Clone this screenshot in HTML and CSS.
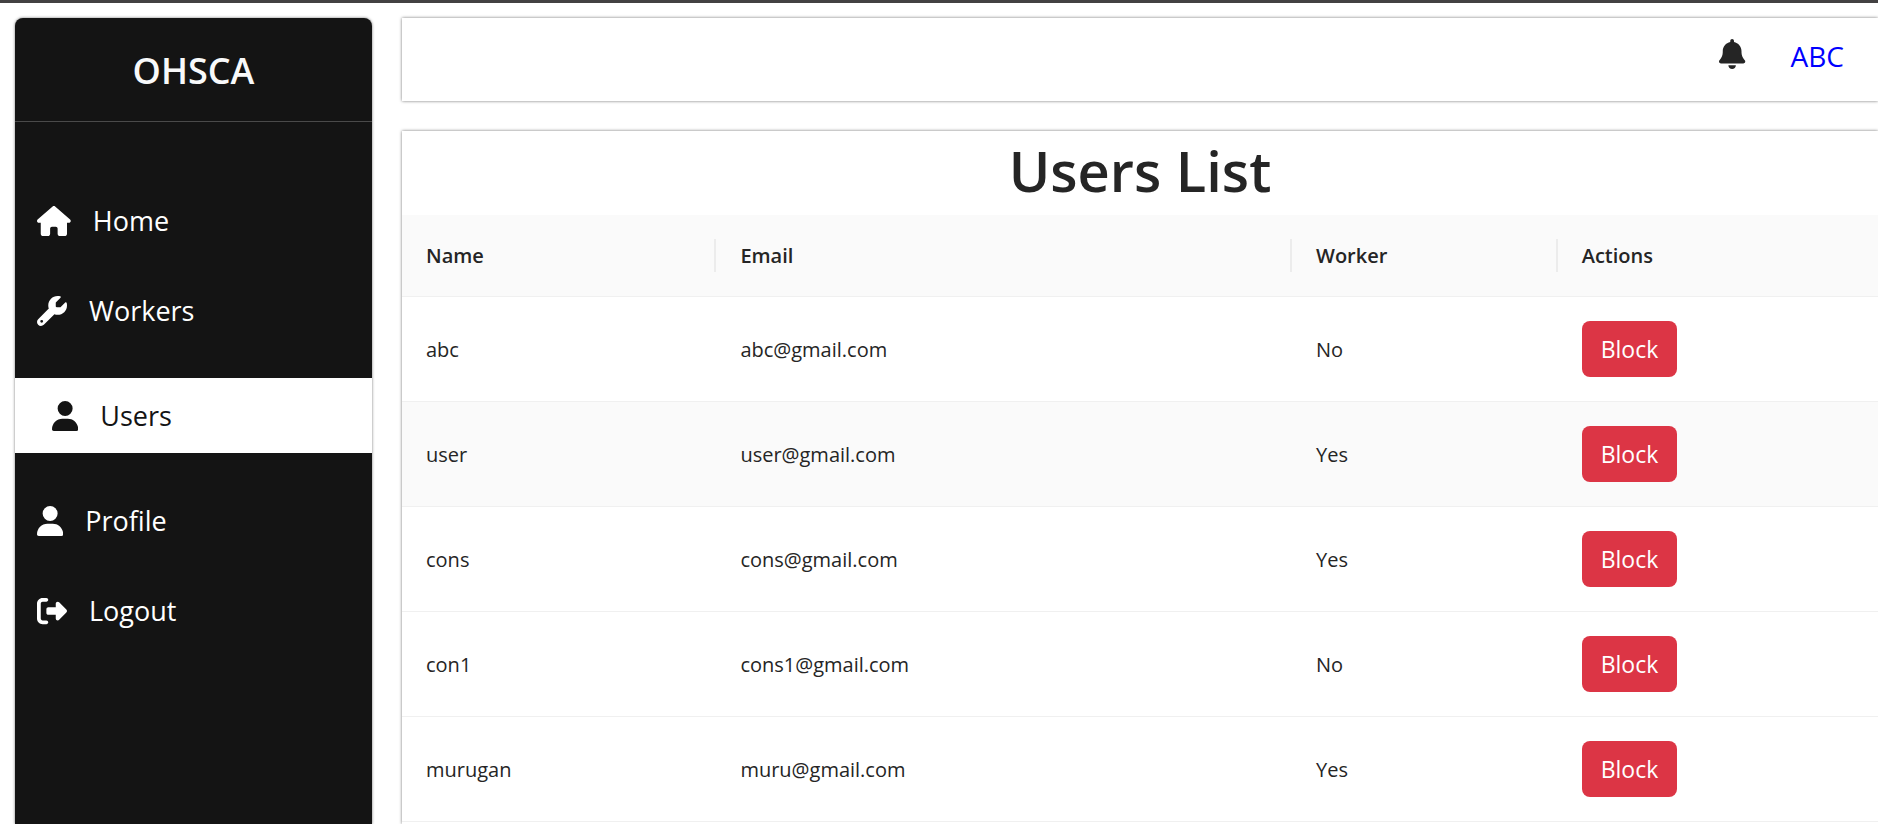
FILE: index.html
```html
<!DOCTYPE html>
<html lang="en">
<head>
<meta charset="utf-8">
<title>OHSCA - Users List</title>
<link rel="stylesheet" href="styles.css">
</head>
<body>
<div class="layout">
  <aside class="sidebar">
    <h2 class="brand">OHSCA</h2>
    <nav class="menu">
      <a class="menu-item" href="#home"><svg class="icon" viewBox="0 0 576 512" aria-hidden="true"><path d="M575.8 255.5c0 18-15 32.1-32 32.1h-32l.7 160.2c0 2.7-.2 5.4-.5 8.1V472c0 22.1-17.900 40-40 40H456c-1.100 0-2.200 0-3.300-.1c-1.400 .1-2.800 .1-4.200 .1H416 392c-22.100 0-40-17.900-40-40V448 384c0-17.700-14.300-32-32-32H256c-17.700 0-32 14.300-32 32v64 24c0 22.100-17.900 40-40 40H160 128.100c-1.500 0-3-.1-4.500-.2c-1.200 .1-2.400 .2-3.600 .2H104c-22.100 0-40-17.900-40-40V360c0-.9 0-1.900 .1-2.800V287.600H32c-18 0-32-14-32-32.100c0-9 3-17 10-24L266.400 8c7-7 15-8 22-8s15 2 21 7L564.800 231.500c8 7 12 15 11 24z"/></svg>Home</a>
      <a class="menu-item" href="#workers"><svg class="icon" viewBox="0 0 512 512" aria-hidden="true"><path d="M352 320c88.400 0 160-71.600 160-160c0-15.300-2.200-30.100-6.200-44.200c-3.100-10.800-16.400-13.200-24.300-5.300l-76.800 76.800c-3 3-7.100 4.700-11.300 4.700H336c-8.800 0-16-7.200-16-16V118.600c0-4.200 1.700-8.300 4.700-11.300l76.800-76.800c7.900-7.900 5.400-21.200-5.300-24.300C382.100 2.200 367.300 0 352 0C263.600 0 192 71.600 192 160c0 19.100 3.400 37.500 9.500 54.500L19.900 396.100C7.200 408.800 0 426.100 0 444.100C0 481.600 30.400 512 67.900 512c18 0 35.300-7.200 48-19.900L297.500 310.500c17 6.200 35.400 9.500 54.500 9.500zM80 408a24 24 0 1 1 0 48 24 24 0 1 1 0-48z"/></svg>Workers</a>
      <a class="menu-item active" href="#users" aria-current="page"><svg class="icon" viewBox="0 0 448 512" aria-hidden="true"><path d="M224 256A128 128 0 1 0 224 0a128 128 0 1 0 0 256zm-45.700 48C79.800 304 0 383.800 0 482.300C0 498.700 13.300 512 29.700 512H418.300c16.400 0 29.700-13.300 29.700-29.700C448 383.800 368.200 304 269.700 304H178.300z"/></svg>Users</a>
      <a class="menu-item" href="#profile"><svg class="icon" viewBox="0 0 448 512" aria-hidden="true"><path d="M224 256A128 128 0 1 0 224 0a128 128 0 1 0 0 256zm-45.700 48C79.800 304 0 383.800 0 482.300C0 498.700 13.300 512 29.700 512H418.300c16.400 0 29.700-13.300 29.700-29.700C448 383.800 368.200 304 269.700 304H178.300z"/></svg>Profile</a>
      <a class="menu-item" href="#logout"><svg class="icon" viewBox="0 0 512 512" aria-hidden="true"><path d="M377.900 105.900L500.700 228.700c7.200 7.200 11.300 17.100 11.300 27.300s-4.100 20.100-11.300 27.300L377.900 406.100c-6.400 6.400-15 9.900-24 9.900c-18.700 0-33.900-15.200-33.900-33.900l0-62.100-128 0c-17.700 0-32-14.300-32-32l0-64c0-17.700 14.300-32 32-32l128 0 0-62.100c0-18.700 15.200-33.900 33.900-33.900c9 0 17.600 3.600 24 9.900zM160 96L96 96c-17.700 0-32 14.300-32 32l0 256c0 17.700 14.300 32 32 32l64 0c17.700 0 32 14.300 32 32s-14.300 32-32 32l-64 0c-53 0-96-43-96-96L0 128C0 75 43 32 96 32l64 0c17.700 0 32 14.300 32 32s-14.300 32-32 32z"/></svg>Logout</a>
    </nav>
  </aside>
  <div class="content">
    <header class="topbar">
      <button class="bell" type="button" aria-label="Notifications"><svg class="icon" viewBox="0 0 448 512" aria-hidden="true"><path d="M224 0c-17.700 0-32 14.300-32 32V51.200C119 66 64 130.600 64 208v18.800c0 47-17.300 92.400-48.500 127.600l-7.400 8.300c-8.400 9.400-10.400 22.900-5.300 34.400S19.400 416 32 416H416c12.600 0 24-7.400 29.200-18.900s3.100-25-5.300-34.400l-7.400-8.300C401.300 319.200 384 273.900 384 226.800V208c0-77.400-55-142-128-156.800V32c0-17.700-14.300-32-32-32zm45.300 493.300c12-12 18.700-28.300 18.700-45.300H224 160c0 17 6.700 33.300 18.700 45.300s28.300 18.700 45.300 18.700s33.300-6.700 45.300-18.700z"/></svg></button>
      <a class="account" href="#profile">ABC</a>
    </header>
    <main class="card">
      <h1 class="title">Users List</h1>
      <table class="users">
        <colgroup><col class="col-name"><col class="col-email"><col class="col-worker"><col></colgroup>
        <thead>
          <tr><th scope="col">Name</th><th scope="col">Email</th><th scope="col">Worker</th><th scope="col">Actions</th></tr>
        </thead>
        <tbody>
          <tr><td>abc</td><td>abc@gmail.com</td><td>No</td><td><button class="block" type="button">Block</button></td></tr>
          <tr class="hovered"><td>user</td><td>user@gmail.com</td><td>Yes</td><td><button class="block" type="button">Block</button></td></tr>
          <tr><td>cons</td><td>cons@gmail.com</td><td>Yes</td><td><button class="block" type="button">Block</button></td></tr>
          <tr><td>con1</td><td>cons1@gmail.com</td><td>No</td><td><button class="block" type="button">Block</button></td></tr>
          <tr><td>murugan</td><td>muru@gmail.com</td><td>Yes</td><td><button class="block" type="button">Block</button></td></tr>
        </tbody>
      </table>
    </main>
  </div>
</div>
</body>
</html>
```
FILE: styles.css
```css
* {
  box-sizing: border-box;
}

body {
  margin: 0;
  font-family: "Segoe UI", "Open Sans", sans-serif;
  color: #252525;
  background: #fff;
}

.layout {
  display: flex;
  gap: 30px;
  min-height: 100vh;
  padding: 15px 0 0 15px;
  border-top: 3px solid #434142;
  overflow: hidden;
}

.sidebar,
.topbar,
.card {
  box-shadow: 0 0 3px rgba(0, 0, 0, 0.55);
}

.sidebar {
  flex: 0 0 357px;
  background: #141414;
  border-radius: 8px 8px 0 0;
}

.brand {
  margin: 0;
  padding: 28px 0 26px;
  border-bottom: 1px solid #4a4a4a;
  font-size: 36px;
  line-height: 49px;
  font-weight: 600;
  text-align: center;
  color: #f8f9fa;
}

.menu {
  display: flex;
  flex-direction: column;
  gap: 45px;
  padding-top: 76px;
}

.menu-item {
  display: flex;
  align-items: center;
  gap: 22px;
  padding: 0 22px;
  font-size: 27px;
  line-height: 45px;
  color: #fff;
  text-decoration: none;
}

.menu-item.active {
  padding: 15px 37px;
  background: #fff;
  color: #141414;
}

.icon {
  display: block;
  height: 30px;
  fill: currentColor;
}

.content {
  flex: 1;
  min-width: 0;
  display: flex;
  flex-direction: column;
  gap: 30px;
}

.topbar {
  display: flex;
  justify-content: flex-end;
  align-items: flex-start;
  gap: 45px;
  padding: 16px 34px 22px;
}

.bell {
  padding: 5px 0;
  border: 0;
  background: none;
  color: #252525;
}

.account {
  font-size: 28px;
  line-height: 45px;
  color: #00f;
  text-decoration: none;
}

.card {
  flex: 1;
}

.title {
  margin: 0;
  padding: 3px 0 9px;
  font-size: 56px;
  line-height: 72px;
  font-weight: 600;
  text-align: center;
}

.users {
  width: 100%;
  table-layout: fixed;
  border-collapse: separate;
  border-spacing: 0;
  font-size: 20px;
  line-height: 33px;
}

.col-name {
  width: 21.3%;
}

.col-email {
  width: 39%;
}

.col-worker {
  width: 18%;
}

.users th,
.users td {
  padding: 24px;
  border-bottom: 1px solid #f0f0f0;
  text-align: left;
}

.users th {
  position: relative;
  background: #fafafa;
  font-weight: 600;
}

.users th:not(:last-child)::after {
  content: "";
  position: absolute;
  top: 24px;
  bottom: 24px;
  right: 0;
  width: 2px;
  background: #ececec;
}

.hovered td {
  background: #fafafa;
}

.block {
  display: block;
  padding: 10px 19px;
  border: 0;
  border-radius: 8px;
  background: #dc3545;
  color: #fff;
  font: inherit;
  font-size: 23px;
  line-height: 36px;
}
```
